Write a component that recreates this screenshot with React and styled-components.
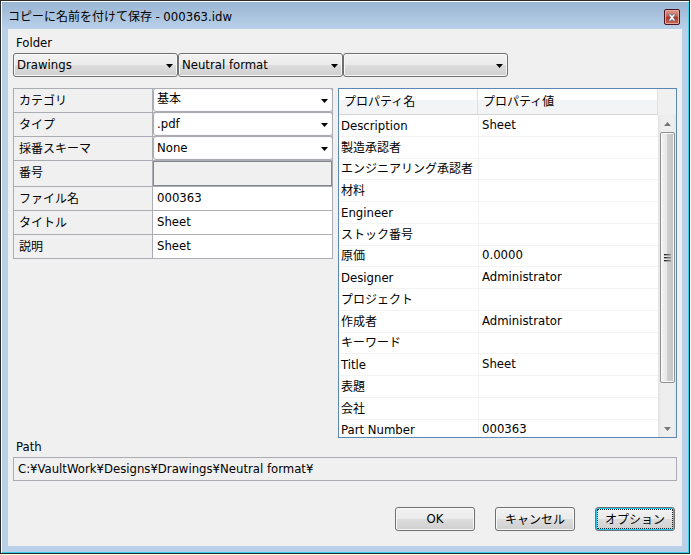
import React from "react"
import styled, { createGlobalStyle, css } from "styled-components"

const theme = {
  face: "#f0f0f0",
  frame: "#b9d0e9",
  line: "#abadb3",
  listBorder: "#5b87b4",
  latin: "13px",
  kana: "12px",
}

const GlobalStyles = createGlobalStyle`
  * {
    box-sizing: border-box;
  }
  body {
    margin: 0;
    background: #fbfbdc;
    color: #000;
    font-family: "DejaVu Sans Condensed", "Noto Sans CJK JP", sans-serif;
    font-size: ${theme.kana};
    line-height: 16px;
  }
`

const folders = ["Drawings", "Neutral format", ""]

const fields = [
  { id: "category", label: "カテゴリ", value: "基本", type: "select" },
  { id: "type", label: "タイプ", value: ".pdf", type: "select" },
  { id: "scheme", label: "採番スキーマ", value: "None", type: "select" },
  { id: "number", label: "番号", value: "", type: "disabled" },
  { id: "file", label: "ファイル名", value: "000363", type: "text" },
  { id: "title", label: "タイトル", value: "Sheet", type: "text" },
  { id: "comment", label: "説明", value: "Sheet", type: "text" },
]

const properties = [
  ["Description", "Sheet"],
  ["製造承認者", ""],
  ["エンジニアリング承認者", ""],
  ["材料", ""],
  ["Engineer", ""],
  ["ストック番号", ""],
  ["原価", "0.0000"],
  ["Designer", "Administrator"],
  ["プロジェクト", ""],
  ["作成者", "Administrator"],
  ["キーワード", ""],
  ["Title", "Sheet"],
  ["表題", ""],
  ["会社", ""],
  ["Part Number", "000363"],
]

const isLatin = text => /^[\x20-\x7e]/.test(text)

const textSize = css`
  font-size: ${p => (p.$latin ? theme.latin : theme.kana)};
`

const Arrow = () => (
  <ArrowIcon viewBox="0 0 7 4" aria-hidden="true">
    <path d="M0 0h7L3.500 4z" />
  </ArrowIcon>
)

const Select = ({ id, label, value, plain }) => (
  <SelectBox>
    <SelectInput
      id={id}
      aria-label={label}
      defaultValue={value}
      $plain={plain}
      $latin={isLatin(value)}
    >
      <option value={value}>{value}</option>
    </SelectInput>
    <Arrow />
  </SelectBox>
)

const Field = ({ id, label, value, type }) => (
  <FieldRow $tall={type === "disabled"}>
    <FieldLabel htmlFor={id}>{label}</FieldLabel>
    {type === "select" ? (
      <Select id={id} value={value} plain />
    ) : (
      <FieldInput id={id} defaultValue={value} disabled={type === "disabled"} />
    )}
  </FieldRow>
)

const PropertyList = () => (
  <ListBox>
    <ListView>
      <Table>
        <thead>
          <tr>
            <HeadCell $name>プロパティ名</HeadCell>
            <HeadCell>プロパティ値</HeadCell>
          </tr>
        </thead>
        <tbody>
          {properties.map(([name, value]) => (
            <Row key={name}>
              <Cell $latin={isLatin(name)}>{name}</Cell>
              <Cell $latin $value>
                {value}
              </Cell>
            </Row>
          ))}
        </tbody>
      </Table>
    </ListView>
    <ScrollColumn>
      <ScrollCorner />
      <ScrollBar>
        <ScrollButton aria-label="上へ">
          <svg width="7" height="4" viewBox="0 0 7 4">
            <path d="M0 4L3.500 0L7 4z" fill="#777" />
          </svg>
        </ScrollButton>
        <ScrollTrack>
          <Thumb>
            <svg width="7" height="9" viewBox="0 0 7 9">
              <linearGradient id="grip">
                <stop stopColor="#111" />
                <stop offset="1" stopColor="#999" />
              </linearGradient>
              <path
                d="M0 1h7v1H0zM0 4h7v1H0zM0 7h7v1H0z"
                fill="url(#grip)"
              />
              <path d="M0 2h7v1H0zM0 5h7v1H0zM0 8h7v1H0z" fill="#aaa" />
            </svg>
          </Thumb>
        </ScrollTrack>
        <ScrollButton aria-label="下へ">
          <svg width="7" height="4" viewBox="0 0 7 4">
            <path d="M0 0h7L3.500 4z" fill="#777" />
          </svg>
        </ScrollButton>
      </ScrollBar>
    </ScrollColumn>
  </ListBox>
)

class App extends React.Component {
  render() {
    return (
      <Page>
        <GlobalStyles />
        <Window>
          <TitleBar>
            <Title>
              コピーに名前を付けて保存 <FileName>- 000363.idw</FileName>
            </Title>
            <CloseButton aria-label="閉じる">
              <svg width="8" height="7" viewBox="0 0 8 7">
                <path
                  d="M0 0h3l1 1.500L5 0h3L5.500 3.500L8 7H5L4 5.500L3 7H0l2.500-3.500z"
                  fill="#fff"
                  stroke="#4a4f6a"
                  strokeWidth="0.8"
                />
              </svg>
            </CloseButton>
          </TitleBar>
          <Content>
            <Caption>Folder</Caption>
            <FolderRow>
              {folders.map((name, i) => (
                <Select key={i} label={`Folder ${i + 1}`} value={name} />
              ))}
            </FolderRow>
            <Panels>
              <Form>
                {fields.map(field => (
                  <Field key={field.id} {...field} />
                ))}
              </Form>
              <PropertyList />
            </Panels>
            <Caption as="label" htmlFor="path">
              Path
            </Caption>
            <PathInput
              id="path"
              readOnly
              value="C:¥VaultWork¥Designs¥Drawings¥Neutral format¥"
            />
            <Buttons>
              <Button $latin>OK</Button>
              <Button>キャンセル</Button>
              <Button $active>オプション</Button>
            </Buttons>
          </Content>
        </Window>
      </Page>
    )
  }
}

const Page = styled.div`
  height: 100vh;
  min-height: 420px;
  padding: 0 1px 1px 0;
`

const Window = styled.div`
  height: 100%;
  display: flex;
  flex-direction: column;
  padding: 0 7px 7px;
  border: 1px solid #2b2b2f;
  background: linear-gradient(#98b4d2, ${theme.frame} 28px);
  box-shadow: inset 1px 1px #fff, inset -1px -1px #35d0f0;
`

const TitleBar = styled.div`
  flex: none;
  height: 28px;
  display: flex;
  align-items: center;
  justify-content: space-between;
  padding: 4px 2px 0 0;
`

const Title = styled.h1`
  margin: 0;
  font-size: ${theme.kana};
  font-weight: normal;
`

const FileName = styled.span`
  font-size: ${theme.latin};
`

const CloseButton = styled.button`
  display: flex;
  align-items: center;
  justify-content: center;
  width: 16px;
  height: 16px;
  padding: 0;
  border: 1px solid #4a1420;
  border-radius: 2px;
  background: linear-gradient(#dc9a8c, #c9675a 45%, #ae3220 50%, #cf6a50);
  box-shadow: inset 0 0 0 1px #e0a79c;
`

const Content = styled.main`
  flex: 1;
  min-height: 0;
  display: flex;
  flex-direction: column;
  padding: 5px 5px 15px;
  background: ${theme.face};
`

const Caption = styled.div`
  flex: none;
  height: 19px;
  padding: 1px 3px;
  font-size: ${theme.latin};
`

const FolderRow = styled.div`
  flex: none;
  display: grid;
  grid-template-columns: repeat(3, minmax(0, 165px));
`

const SelectBox = styled.div`
  position: relative;
  flex: 1;
  min-width: 0;
  height: 24px;
`

const ArrowIcon = styled.svg`
  position: absolute;
  right: 5px;
  top: 11px;
  width: 7px;
  height: 4px;
  pointer-events: none;
`

const SelectInput = styled.select`
  appearance: none;
  display: block;
  width: 100%;
  height: 100%;
  padding: 0 16px 2px 3px;
  border: 1px solid #707070;
  border-radius: 3px;
  background: linear-gradient(#f2f2f2, #ebebeb 50%, #dddddd 50%, #cfcfcf);
  box-shadow: inset 0 0 0 1px #f8f8f8;
  color: #000;
  font-family: inherit;
  ${textSize}
  ${p =>
    p.$plain &&
    css`
      border-color: ${theme.line};
      background: #fff;
    `}
`

const Panels = styled.div`
  flex: 1;
  min-height: 0;
  display: grid;
  grid-template-columns: minmax(0, 320fr) minmax(0, 339fr);
  gap: 5px;
  align-items: start;
  margin-top: 11px;
`

const Form = styled.form`
  border: 1px solid ${theme.line};
  border-top: 0;
`

const FieldRow = styled.div`
  display: flex;
  height: ${p => (p.$tall ? "26px" : "24px")};
  border-top: 1px solid ${theme.line};
  ${SelectBox} {
    margin: -1px -1px 0 0;
  }
`

const FieldLabel = styled.label`
  flex: none;
  width: 139px;
  padding: 4px 5px 3px;
  border-right: 1px solid ${theme.line};
`

const FieldInput = styled.input`
  flex: 1;
  min-width: 0;
  padding: 0 4px 2px;
  border: 0;
  background: #fff;
  font-family: inherit;
  font-size: ${theme.latin};
  &:disabled {
    border: 1px solid #83868d;
    background: ${theme.face};
  }
`

const ListBox = styled.div`
  display: flex;
  height: 100%;
  min-height: 0;
  border: 1px solid ${theme.listBorder};
  background: #fff;
`

const ListView = styled.div`
  flex: 1;
  min-width: 0;
  overflow: hidden;
`

const Table = styled.table`
  width: 100%;
  table-layout: fixed;
  border-collapse: separate;
  border-spacing: 0;
`

const HeadCell = styled.th`
  width: ${p => (p.$name ? "139px" : "auto")};
  height: 26px;
  padding: 0 5px;
  border-right: 1px solid #dfe0e2;
  border-bottom: 1px solid #d5d5d5;
  background: linear-gradient(#fff 45%, #f3f4f6 45%);
  font-weight: normal;
  text-align: left;
`

// every fourth row is a pixel shorter, so the pitch averages 21.75
const Row = styled.tr`
  height: 22px;
  &:nth-child(4n + 3) {
    height: 21px;
  }
`

const Cell = styled.td`
  padding: 0 2px;
  border-bottom: 1px solid #f3f3f3;
  line-height: 16px;
  white-space: nowrap;
  ${textSize}
  ${p =>
    p.$value &&
    css`
      padding: 0 3px 2px;
      border-left: 1px solid #f3f3f3;
    `}
`

const ScrollColumn = styled.div`
  flex: none;
  width: 18px;
  display: flex;
  flex-direction: column;
`

const ScrollCorner = styled.div`
  flex: none;
  height: 26px;
  background: ${theme.face};
`

const ScrollBar = styled.div`
  flex: 1;
  min-height: 0;
  display: flex;
  flex-direction: column;
  padding: 0 1px 0 2px;
  background: linear-gradient(90deg, #e3e3e3, #eee 20%, #eee 80%, #e8e8e8);
`

const ScrollButton = styled.button`
  flex: none;
  display: flex;
  align-items: center;
  justify-content: center;
  height: 17px;
  padding: 0;
  border: 0;
  background: none;
`

const ScrollTrack = styled.div`
  flex: 1;
  min-height: 0;
`

const Thumb = styled.div`
  display: flex;
  align-items: center;
  justify-content: center;
  height: 87%;
  border: 1px solid #8f8f8f;
  border-radius: 2px;
  background: linear-gradient(90deg, #f5f5f5, #e6e6e6 45%, #cfcfd1 50%, #c3c3c6);
  box-shadow: inset 0 0 0 1px #fafafa;
`

const PathInput = styled.input`
  flex: none;
  height: 24px;
  padding: 0 4px 2px;
  border: 1px solid ${theme.line};
  background: ${theme.face};
  font-family: inherit;
  font-size: ${theme.latin};
`

const Buttons = styled.div`
  flex: none;
  display: flex;
  justify-content: flex-end;
  gap: 20px;
  margin-top: 26px;
  padding-right: 2px;
`

const Button = styled.button`
  width: 80px;
  height: 24px;
  padding: 0 0 2px;
  border: 1px solid #707070;
  border-radius: 3px;
  background: linear-gradient(#f2f2f2, #ebebeb 50%, #dddddd 50%, #cfcfcf);
  box-shadow: inset 0 0 0 1px #f8f8f8;
  color: #000;
  font-family: inherit;
  ${textSize}
  ${p =>
    p.$active &&
    css`
      box-shadow: inset 0 0 0 1px #1fc8f5;
      outline: 1px dotted #222;
      outline-offset: -3px;
    `}
`

export default App
